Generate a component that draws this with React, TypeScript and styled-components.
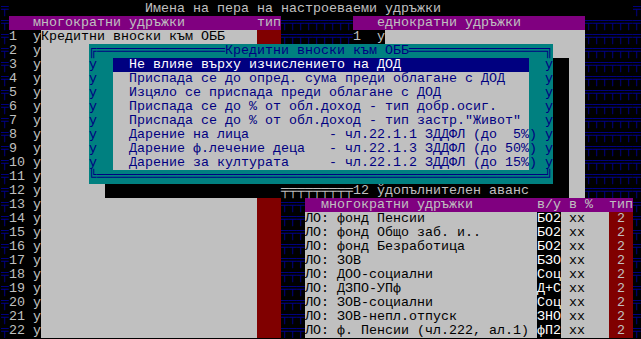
import React from "react";
import styled, { createGlobalStyle, css } from "styled-components";

const NAVY = "#000080";
const PURPLE = "#800080";
const TEAL = "#008080";
const GRAY = "#c0c0c0";
const MAROON = "#800000";

const GlobalStyle = createGlobalStyle`
  html, body { margin: 0; padding: 0; background: #000; }
  body { width: 641px; height: 339px; overflow: hidden; }
`;

type Cells = { $r: number; $c: number; $h?: number; $w: number };
const cells = css<Cells>`
  grid-row: ${(p) => p.$r + 1} / span ${(p) => p.$h ?? 1};
  grid-column: ${(p) => p.$c + 1} / span ${(p) => p.$w};
`;

const Screen = styled.div`
  display: grid;
  grid-template-columns: repeat(80, 8px);
  grid-template-rows: repeat(24, 14px);
  padding: 2px 0 0 1px;
  width: 640px;
  height: 336px;
  background: #000;
  font-family: "Liberation Mono", "DejaVu Sans Mono", monospace;
  font-size: 13.333px;
  line-height: 14px;
  white-space: pre;
`;

const PatternStrip = styled.div<Cells>`
  ${cells}
  color: ${NAVY};
  overflow: hidden;
`;

const Line = styled.div`
  height: 14px;
`;

const TitleBar = styled.div<Cells>`
  ${cells}
  background: #000;
  color: ${GRAY};
  padding-left: ${17 * 8}px;
`;

const Window = styled.div<Cells & { $cols: string }>`
  ${cells}
  display: grid;
  grid-template-columns: ${(p) => p.$cols};
  grid-template-rows: repeat(${(p) => p.$h ?? 1}, 14px);
  overflow: hidden;
`;

const HeaderCell = styled.div<{ $pad?: number; $span?: string }>`
  grid-row: 1;
  grid-column: ${(p) => p.$span ?? "auto"};
  background: ${PURPLE};
  color: ${GRAY};
  padding-left: ${(p) => (p.$pad ?? 0) * 8}px;
`;

type Tone = "index" | "field" | "code" | "type";
const toneBg: Record<Tone, string> = { index: "#000", field: GRAY, code: "#000", type: MAROON };
const toneFg: Record<Tone, string> = { index: GRAY, field: "#000", code: "#fff", type: GRAY };

const Column = styled.div<{ $tone: Tone; $pad?: number }>`
  grid-row: 2 / -1;
  background: ${(p) => toneBg[p.$tone]};
  color: ${(p) => toneFg[p.$tone]};
  padding-left: ${(p) => (p.$pad ?? 0) * 8}px;
`;

const Shadow = styled.div<Cells & { $pad?: number }>`
  ${cells}
  background: #000;
  color: ${GRAY};
  padding-left: ${(p) => (p.$pad ?? 0) * 8}px;
`;

const Popup = styled.div<Cells>`
  ${cells}
  background: ${TEAL};
  color: ${NAVY};
  display: grid;
  grid-template-columns: 8px 16px 416px 16px 8px;
  grid-template-rows: repeat(10, 14px);
`;

const FrameLine = styled.div<{ $row: number }>`
  grid-column: 1 / -1;
  grid-row: ${(p) => p.$row};
`;

const FrameSide = styled.div<{ $col: number }>`
  grid-column: ${(p) => p.$col};
  grid-row: 2 / 10;
`;

const Menu = styled.div`
  grid-column: 3;
  grid-row: 2 / 10;
  background: ${GRAY};
`;

const MenuItem = styled.div<{ $active?: boolean }>`
  height: 14px;
  padding-left: 16px;
  background: ${(p) => (p.$active ? NAVY : "transparent")};
  color: ${(p) => (p.$active ? "#fff" : NAVY)};
`;

const strips: Cells[] = [
  { $r: 0, $c: 0, $h: 24, $w: 1 },
  { $r: 0, $c: 79, $h: 24, $w: 1 },
  { $r: 1, $c: 35, $h: 12, $w: 9 },
  { $r: 14, $c: 35, $h: 10, $w: 3 },
  { $r: 1, $c: 73, $h: 13, $w: 6 },
];

const leftNums = Array.from({ length: 22 }, (_, i) => `${String(i + 1).padEnd(3)}у`);

const deductions: [string, string][] = [
  ["ЛО: фонд Пенсии", "БО2"],
  ["ЛО: фонд Общо заб. и..", "БО2"],
  ["ЛО: фонд Безработица", "БО2"],
  ["ЛО: ЗОВ", "БЗО"],
  ["ЛО: ДОО-социални", "Соц"],
  ["ЛО: ДЗПО-УПф", "Д+С"],
  ["ЛО: ЗОВ-социални", "Соц"],
  ["ЛО: ЗОВ-непл.отпуск", "ЗНО"],
  ["ЛО: ф. Пенсии (чл.222, ал.1)", "фП2"],
];

const menuItems = [
  "Не влияе върху изчислението на ДОД",
  "Приспада се до опред. сума преди облагане с ДОД",
  "Изцяло се приспада преди облагане с ДОД",
  "Приспада се до % от обл.доход - тип добр.осиг.",
  "Приспада се до % от обл.доход - тип застр.\"Живот\"",
  "Дарение на лица          - чл.22.1.1 ЗДДФЛ (до  5%)",
  "Дарение ф.лечение деца   - чл.22.1.3 ЗДДФЛ (до 50%)",
  "Дарение за културата     - чл.22.1.2 ЗДДФЛ (до 15%)",
];

const popupTitle = "Кредитни вноски към ОББ";

export default function App() {
  return (
    <>
      <GlobalStyle />
      <Screen>
        {strips.map((s, i) => (
          <PatternStrip key={i} {...s}>
            {Array.from({ length: s.$h ?? 1 }, (_, k) => (
              <Line key={k}>{"╤".repeat(s.$w)}</Line>
            ))}
          </PatternStrip>
        ))}

        <TitleBar $r={0} $c={1} $w={78}>
          Имена на пера на настроеваеми удръжки
        </TitleBar>

        <Window $r={1} $c={1} $h={23} $w={34} $cols="32px 216px 24px">
          <HeaderCell $span="1 / 3" $pad={3}>многократни удръжки</HeaderCell>
          <HeaderCell>тип</HeaderCell>
          <Column $tone="index">
            {leftNums.map((n) => (
              <Line key={n}>{n}</Line>
            ))}
          </Column>
          <Column $tone="field">
            <Line>Кредитни вноски към ОББ</Line>
          </Column>
          <Column $tone="type" />
        </Window>

        <Window $r={1} $c={44} $h={13} $w={29} $cols="32px 200px">
          <HeaderCell $span="1 / 3" $pad={3}>еднократни удръжки</HeaderCell>
          <Column $tone="index">
            <Line>1  у</Line>
          </Column>
          <Column $tone="field" />
        </Window>

        <Window $r={14} $c={38} $h={10} $w={41} $cols="232px 24px 48px 24px">
          <HeaderCell $pad={2}>многократни удръжки</HeaderCell>
          <HeaderCell>в/у</HeaderCell>
          <HeaderCell $pad={1}>в %</HeaderCell>
          <HeaderCell>тип</HeaderCell>
          <Column $tone="field">
            {deductions.map(([name]) => (
              <Line key={name}>{name}</Line>
            ))}
          </Column>
          <Column $tone="code">
            {deductions.map(([name, code]) => (
              <Line key={name}>{code}</Line>
            ))}
          </Column>
          <Column $tone="field" $pad={1}>
            {deductions.map(([name]) => (
              <Line key={name}>xx</Line>
            ))}
          </Column>
          <Column $tone="type" $pad={1}>
            {deductions.map(([name]) => (
              <Line key={name}>2</Line>
            ))}
          </Column>
        </Window>

        <Shadow $r={4} $c={69} $h={9} $w={2} />
        <Shadow $r={13} $c={13} $w={58} $pad={22}>
          {"╤".repeat(9) + "12 ўдопълнителен аванс"}
        </Shadow>

        <Popup $r={3} $c={11} $h={10} $w={58}>
          <FrameLine $row={1}>{"╔" + "═".repeat(16) + popupTitle + "═".repeat(17) + "╗"}</FrameLine>
          <FrameSide $col={1}>
            {Array.from({ length: 8 }, (_, i) => (
              <Line key={i}>у</Line>
            ))}
          </FrameSide>
          <Menu>
            {menuItems.map((m, i) => (
              <MenuItem key={m} $active={i === 0}>
                {m}
              </MenuItem>
            ))}
          </Menu>
          <FrameSide $col={5}>
            {Array.from({ length: 8 }, (_, i) => (
              <Line key={i}>у</Line>
            ))}
          </FrameSide>
          <FrameLine $row={10}>{"╚" + "═".repeat(56) + "╝"}</FrameLine>
        </Popup>
      </Screen>
    </>
  );
}
